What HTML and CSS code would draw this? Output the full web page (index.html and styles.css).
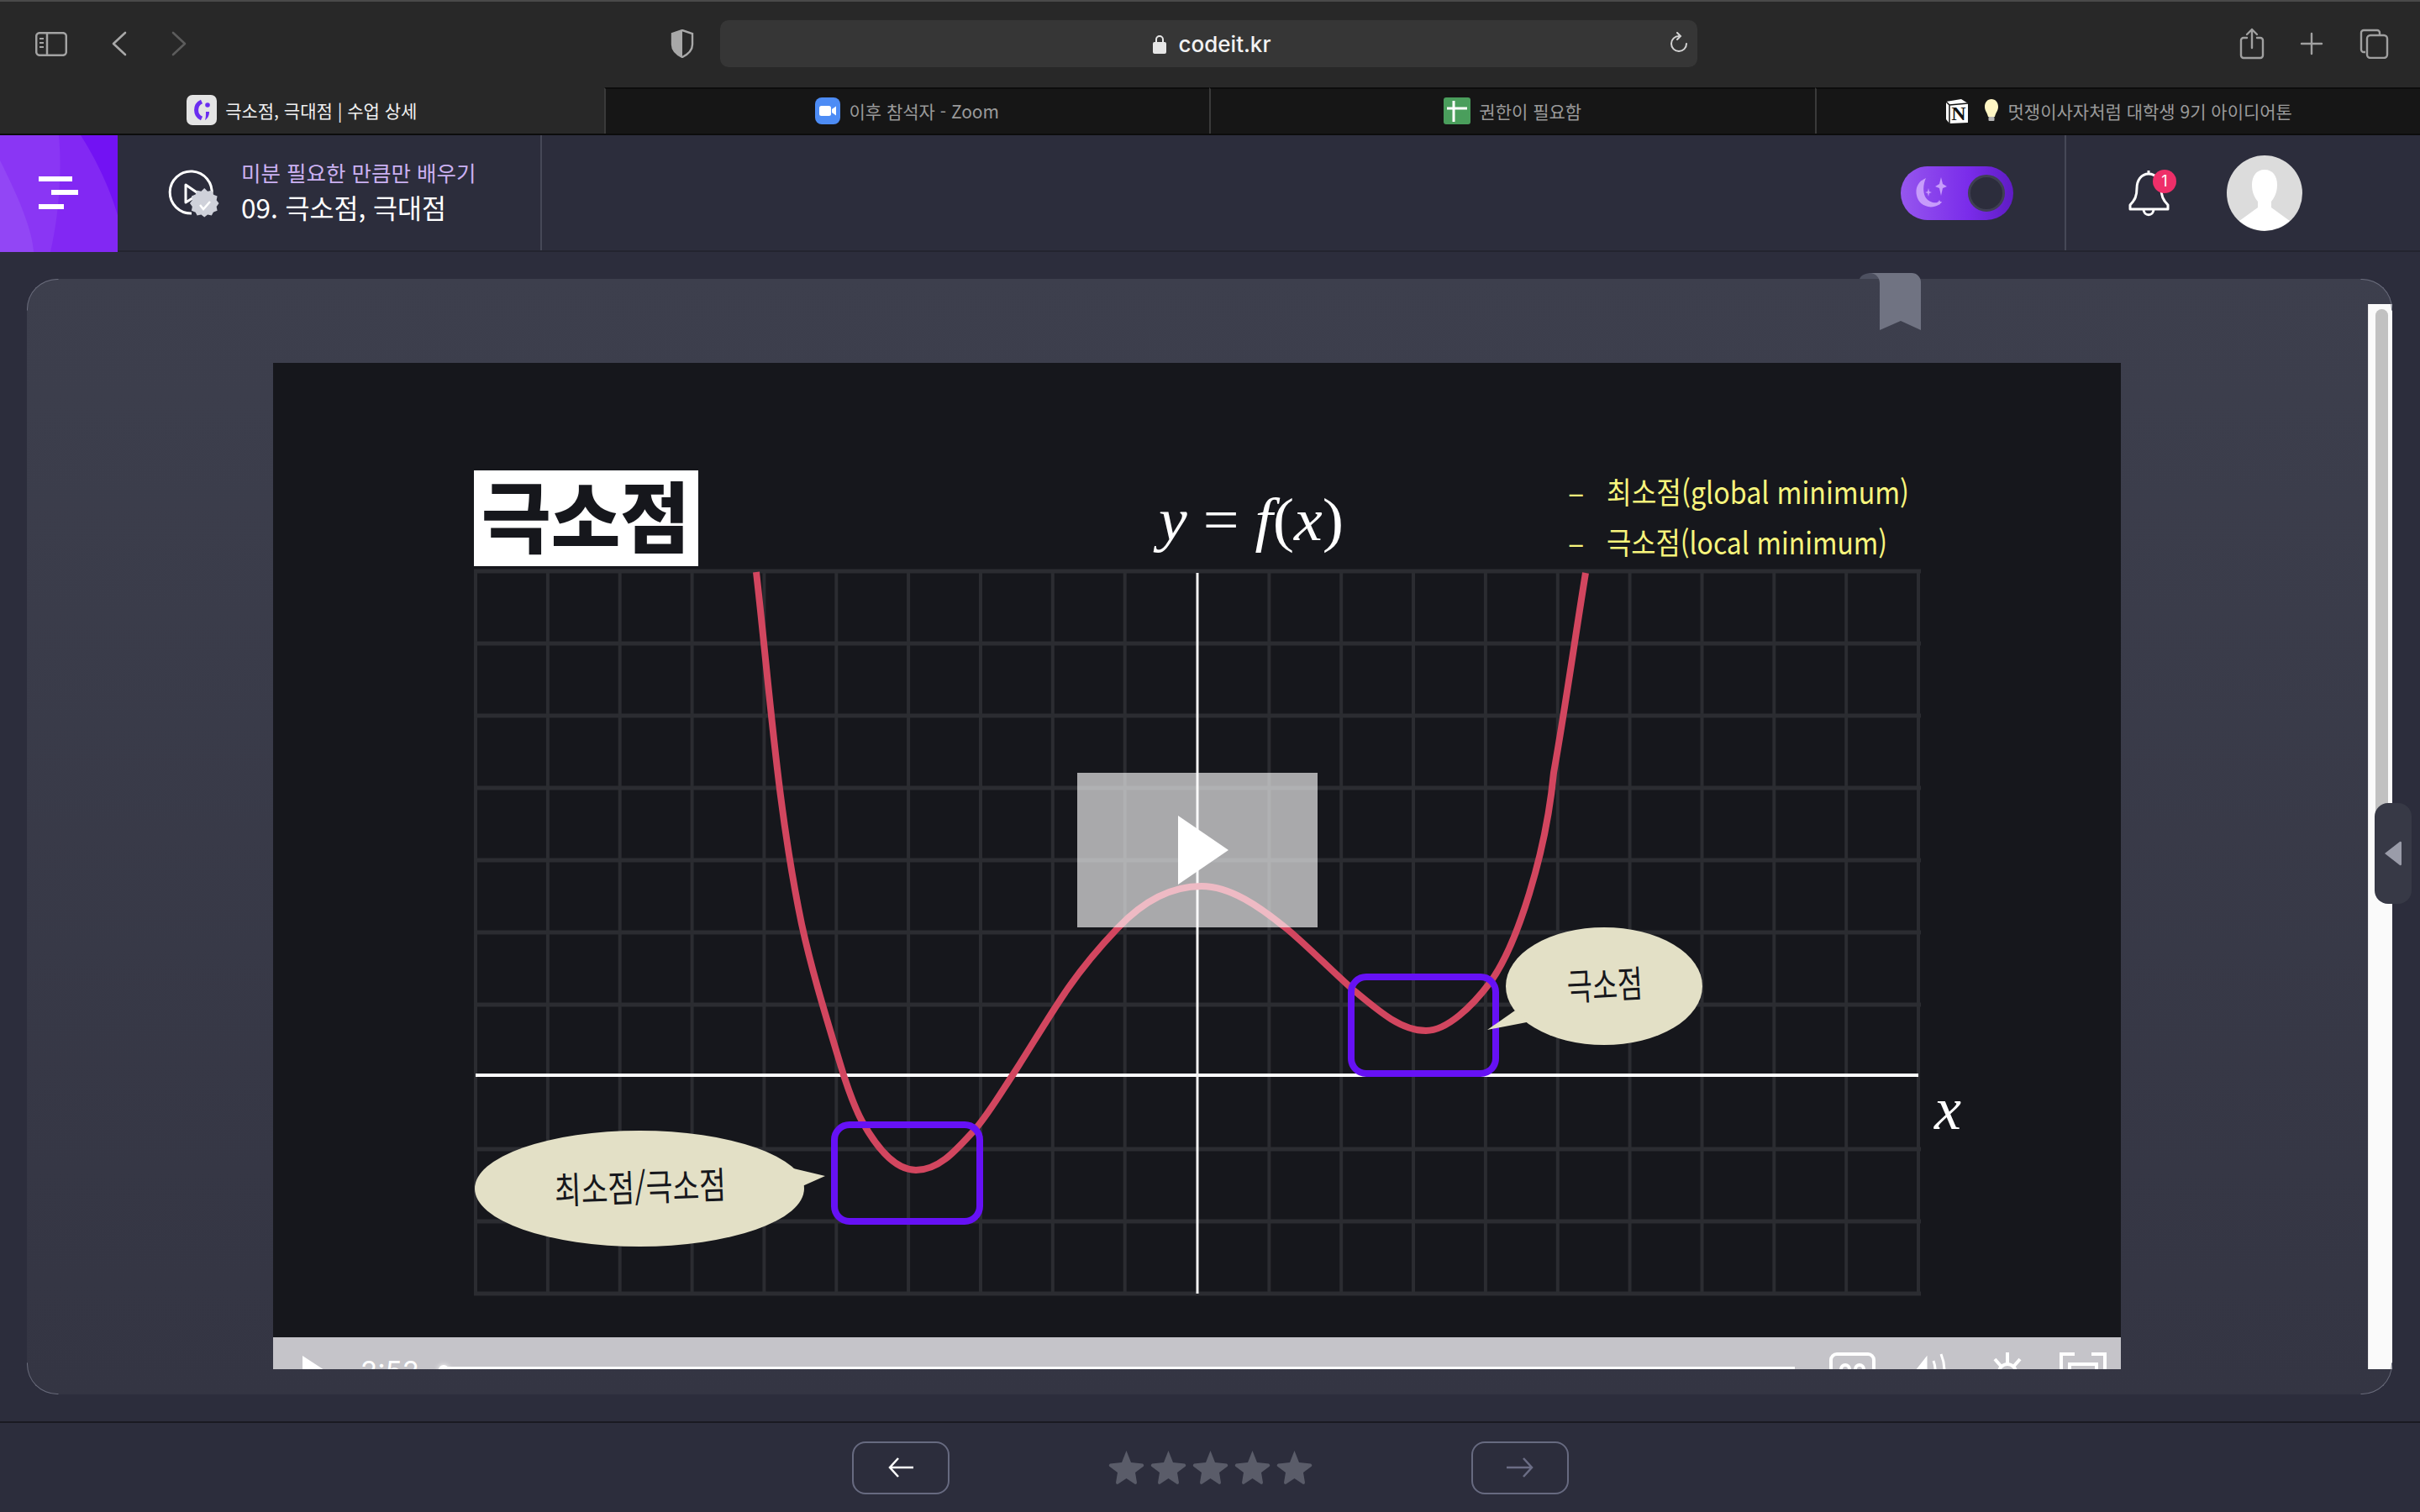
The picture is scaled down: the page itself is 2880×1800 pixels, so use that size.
FILE: index.html
```html
<!DOCTYPE html>
<html lang="ko">
<head>
    <meta charset="UTF-8">
    <title>극소점, 극대점 | 수업 상세</title>
    <link rel="stylesheet" href="styles.css">
</head>
<body>
    <!-- BROWSER CHROME -->
    <div class="toolbar">
        <svg class="ic-sidebar" width="38" height="29" viewBox="0 0 38 29" fill="none" stroke="#a3a3a3" stroke-width="2.5"><rect x="1.2" y="1.2" width="35.6" height="26.6" rx="4"/><path d="M14 1v27"/><path d="M5 8h5M5 13h5M5 18h5" stroke-width="2"/></svg>
        <svg class="ic-back" width="18" height="30" viewBox="0 0 18 30" fill="none" stroke="#a8a8a8" stroke-width="2.6" stroke-linecap="round" stroke-linejoin="round"><path d="M16 2 2 15l14 13"/></svg>
        <svg class="ic-forward" width="18" height="30" viewBox="0 0 18 30" fill="none" stroke="#5c5c5c" stroke-width="2.6" stroke-linecap="round" stroke-linejoin="round"><path d="m2 2 14 13L2 28"/></svg>
        <svg class="ic-shield" width="28" height="34" viewBox="0 0 28 34"><path d="M14 1 2 5v13c0 7 6 12 12 15 6-3 12-8 12-15V5z" fill="none" stroke="#a8a8a8" stroke-width="2.4"/><path d="M14 1 2 5v13c0 7 6 12 12 15z" fill="#a8a8a8"/></svg>
        <div class="url-bar">
            <svg width="16" height="23" viewBox="0 0 16 23"><path d="M4 10V6a4 4 0 0 1 8 0v4" fill="none" stroke="#e6e6e6" stroke-width="2"/><rect y="9" width="16" height="14" rx="2" fill="#e6e6e6"/></svg>
            <span class="url-text">codeit.kr</span>
            <svg class="ic-reload" width="22" height="26" viewBox="0 0 22 26" fill="none" stroke="#d4d4d4" stroke-width="2" stroke-linecap="round"><path d="M11 5a9 9 0 1 0 9 9"/><path d="m9 1 4 4-4 4"/></svg>
        </div>
        <svg class="ic-share" width="30" height="38" viewBox="0 0 30 38" fill="none" stroke="#a0a0a0" stroke-width="2.4" stroke-linecap="round" stroke-linejoin="round"><path d="M9 12H5a3 3 0 0 0-3 3v18a3 3 0 0 0 3 3h20a3 3 0 0 0 3-3V15a3 3 0 0 0-3-3h-4"/><path d="M15 24V2M9 8l6-6 6 6"/></svg>
        <svg class="ic-plus" width="28" height="28" viewBox="0 0 28 28" stroke="#a0a0a0" stroke-width="2.4" stroke-linecap="round"><path d="M14 2v24M2 14h24"/></svg>
        <svg class="ic-tabs" width="35" height="36" viewBox="0 0 35 36" fill="none" stroke="#a0a0a0" stroke-width="2.4"><path d="M7 28H5a3 3 0 0 1-3-3V5a3 3 0 0 1 3-3h16a3 3 0 0 1 3 3v3"/><rect x="9" y="8" width="24" height="27" rx="4"/></svg>
    </div>

    <div class="tabs">
        <div class="tab active">
            <svg width="36" height="36" viewBox="0 0 36 36"><rect width="36" height="36" rx="7" fill="#e4e4e4"/><path d="M18 8a11 11 0 0 0 0 20" fill="none" stroke="#6b2df0" stroke-width="5"/><circle cx="25" cy="12" r="2.8" fill="#6b2df0"/><path d="M27 20c0 5-2 8-5 10 1-3 1-6 1-10z" fill="#6b2df0"/></svg>
            <span>극소점, 극대점 | 수업 상세</span>
        </div>
        <div class="tab">
            <svg width="30" height="32" viewBox="0 0 30 32"><rect width="30" height="32" rx="8" fill="#4d8cf5"/><rect x="5" y="10" width="14" height="12" rx="2.5" fill="#fff"/><path d="m20 14 5-3.500v11l-5-3.500z" fill="#fff"/></svg>
            <span>이후 참석자 - Zoom</span>
        </div>
        <div class="tab">
            <svg width="32" height="32" viewBox="0 0 32 32"><rect width="32" height="32" rx="3" fill="#4a9e5c"/><path d="M12 4v25M4 13h24" stroke="#fff" stroke-width="3"/></svg>
            <span>권한이 필요함</span>
        </div>
        <div class="tab">
            <svg class="notion-icon" width="30" height="30" viewBox="0 0 30 30"><path d="M2 4 20 1l8 5v23l-22 1-4-5z" fill="#fff"/><path d="M2 4 6 8l22-2M6 8v22" fill="none" stroke="#111" stroke-width="1.500"/><text x="17" y="26" text-anchor="middle" class="notion-n">N</text></svg>
            <svg class="bulb-icon" width="20" height="27" viewBox="0 0 20 27"><path d="M10 0c5 0 8 4 8 9 0 5-3 7-4 12H6C5 16 2 14 2 9c0-5 3-9 8-9z" fill="#fff6c4"/><rect x="6.500" y="21" width="7" height="5" rx="1" fill="#b5b5b5"/></svg>
            <span>멋쟁이사자처럼 대학생 9기 아이디어톤</span>
        </div>
    </div>

    <!-- SITE HEADER -->
    <header class="site-header">
        <div class="menu-btn">
            <svg width="140" height="139" viewBox="0 0 140 139">
                <path d="M0 0h140v139H0z" fill="#8228f3"/>
                <path d="M96 0h44v95C130 60 112 25 96 0z" fill="#7212f3"/>
                <path d="M0 0h70c4 45 0 95-10 139H0z" fill="#8a36f4"/>
                <path d="M0 30c20 40 38 80 40 109H0z" fill="#9246f5"/>
                <path d="M46 49h40v6H46zM61 65h32v6H61zM46 82h30v6H46z" fill="#fff"/>
            </svg>
        </div>
        <div class="lesson-info">
            <svg width="62" height="60" viewBox="0 0 62 60" fill="none">
                <path d="M52 32A25 25 0 1 0 28 54" stroke="#fff" stroke-width="3"/>
                <path d="M21 20v21l16-10z" stroke="#fff" stroke-width="3" stroke-linejoin="round"/>
                <path d="m44 28 4 4 5-1 2 5 5 2-1 5 3 4-3 4 1 5-5 2-2 4-5-1-4 3-4-3-5 1-2-4-5-2 1-5-3-4 3-4-1-5 5-2 2-5 5 1z" fill="#cfd1da" transform="translate(1 -3) scale(.96)"/>
                <path d="m38 44 4 5 8-9" stroke="#fff" stroke-width="2.500"/>
            </svg>
            <div class="lesson-text">
                <div class="course-name">미분 필요한 만큼만 배우기</div>
                <div class="lesson-name">09. 극소점, 극대점</div>
            </div>
        </div>
        <div class="header-right">
            <div class="theme-toggle">
                <svg width="50" height="44" viewBox="0 0 50 44"><path d="M14 4C4 8 0 18 4 28c4 10 16 13 25 8 2-1 3-3 4-4-8 3-16 1-20-6-3-7-2-15 1-22z" fill="#c79cfb"/><path d="m32 3 2 8 5 3-5 2-2 9-2-9-5-2 5-3zM17 16l1 4 3 1-3 1-1 4-1-4-3-1 3-1zM30 30l1 2 2 1-2 1-1 2-1-2-2-1 2-1z" fill="#c79cfb"/></svg>
                <div class="toggle-knob"></div>
            </div>
            <div class="header-actions">
                <div class="bell">
                    <svg width="49" height="56" viewBox="0 0 49 56" fill="none" stroke="#fff" stroke-width="3" stroke-linejoin="round"><path d="M24 5c-9 0-14 8-14 17 0 9-2 14-8 20v5h45v-5c-6-6-8-11-8-20 0-9-6-17-15-17z"/><path d="M18 47c0 9 12 9 12 0"/><path d="M24 1v4"/></svg>
                    <span class="badge">1</span>
                </div>
                <div class="avatar">
                    <svg width="90" height="90" viewBox="0 0 90 90"><path d="M45 17c10 0 15 8 15 18 0 9-3 15-7 20v7l22 16a45 45 0 0 1-60 0l22-16v-7c-4-5-7-11-7-20 0-10 5-18 15-18z" fill="#fff"/></svg>
                </div>
            </div>
        </div>
    </header>

    <!-- LESSON -->
    <main class="lesson">
        <div class="card">
            <i class="corner tl"></i><i class="corner tr"></i><i class="corner bl"></i><i class="corner br"></i>
            <div class="bookmark">
                <svg width="73" height="68" viewBox="0 0 73 68"><path d="M0 7c2-5 8-7 14-7h10v7z" fill="#4d5060"/><path d="M12 0h50a11 11 0 0 1 11 11v57l-24-11-25 11V12c0-7-5-12-12-12z" fill="#707382"/></svg>
            </div>
            <div class="video-area">
                <div class="video">
                    <svg class="slide" viewBox="325 432 2199 1160" width="2199" height="1160">
                        <!-- grid -->
                        <path class="grid-v" d="M566 678V1541M651.900 678V1541M737.700 678V1541M823.600 678V1541M909.400 678V1541M995.300 678V1541M1081.100 678V1541M1167 678V1541M1252.800 678V1541M1338.700 678V1541M1510.400 678V1541M1596.200 678V1541M1682 678V1541M1767.900 678V1541M1853.800 678V1541M1939.600 678V1541M2025.500 678V1541M2111.300 678V1541M2197.200 678V1541M2283 678V1541"/>
                        <path class="grid-h" d="M564 680H2286M564 766H2286M564 852H2286M564 938H2286M564 1024H2286M564 1110H2286M564 1196H2286M564 1368H2286M564 1454H2286M564 1540H2286"/>
                        <path class="axis-x" d="M566 1280H2283"/>
                        <path class="axis-y" d="M1425 682V1540"/>
                        <!-- curve -->
                        <path class="curve" d="M900 681C916 821 925 960 954 1100C967 1160 986 1220 1004 1280C1010 1298 1016 1317 1026 1335C1040 1360 1062 1393 1090 1393C1118 1393 1138 1369 1160 1345C1175 1328 1190 1303 1205 1280C1227 1246 1248 1210 1270 1178C1290 1149 1310 1126 1330 1105C1363 1070 1397 1055 1430 1055C1464 1055 1499 1079 1533 1107C1559 1129 1584 1155 1610 1178C1640 1203 1667 1227 1697 1227C1722 1227 1752 1198 1773 1170C1806 1125 1840 1015 1849 920C1862 848 1874 762 1887 682"/>
                        <rect class="focus" x="993" y="1339" width="173" height="115" rx="18"/>
                        <rect class="focus" x="1608" y="1163" width="172" height="115" rx="18"/>
                        <!-- bubbles -->
                        <ellipse class="bubble" cx="761" cy="1415" rx="196" ry="69"/>
                        <path class="bubble" d="M940 1390 982 1400 955 1412z"/>
                        <ellipse class="bubble" cx="1909" cy="1174" rx="117" ry="70"/>
                        <path class="bubble" d="M1803 1203 1770 1226 1822 1216z"/>
                        <text class="bubble-text" x="762" y="1430" textLength="204" lengthAdjust="spacingAndGlyphs" transform="rotate(-2 762 1415)" text-anchor="middle">최소점/극소점</text>
                        <text class="bubble-text" x="1910" y="1189" textLength="90" lengthAdjust="spacingAndGlyphs" transform="rotate(-3 1910 1175)" text-anchor="middle">극소점</text>
                        <!-- headings -->
                        <rect x="564" y="560" width="267" height="114" fill="#fff"/>
                        <text class="slide-title" x="697" y="651" text-anchor="middle" textLength="248" lengthAdjust="spacingAndGlyphs">극소점</text>
                        <text class="formula" x="1379" y="643" textLength="220" lengthAdjust="spacingAndGlyphs"><tspan class="var">y</tspan> = <tspan class="var">f</tspan>(<tspan class="var">x</tspan>)</text>
                        <text class="formula var" x="2302" y="1344" font-size="70">x</text>
                        <text class="note" x="1866" y="600">–</text>
                        <text class="note" x="1912" y="600" textLength="360" lengthAdjust="spacingAndGlyphs">최소점(global minimum)</text>
                        <text class="note" x="1866" y="660">–</text>
                        <text class="note" x="1912" y="660" textLength="334" lengthAdjust="spacingAndGlyphs">극소점(local minimum)</text>
                    </svg>
                    <div class="play-overlay">
                        <svg width="60" height="82" viewBox="0 0 60 82"><path d="M0 0 60 41 0 82z" fill="#fff"/></svg>
                    </div>
                    <div class="controls">
                        <svg class="ctl-play" width="26" height="34" viewBox="0 0 26 34"><path d="M0 0 26 17 0 34z" fill="#fff"/></svg>
                        <span class="ctl-time">2:52</span>
                        <div class="ctl-progress"></div>
                        <svg class="ctl-cc" width="55" height="40" viewBox="0 0 55 40" fill="none" stroke="#fff" stroke-width="4"><rect x="2" y="2" width="51" height="36" rx="7"/><circle cx="19" cy="20" r="5"/><circle cx="36" cy="20" r="5"/></svg>
                        <svg class="ctl-vol" width="46" height="40" viewBox="0 0 46 40" fill="none" stroke="#fff" stroke-width="3"><path d="M0 22h8l11-14v28L8 30H0z" fill="#fff"/><path d="M28 10c3 8 3 16 0 26M37 2c5 12 5 26 0 38"/></svg>
                        <svg class="ctl-gear" width="36" height="40" viewBox="0 0 36 40" fill="none" stroke="#fff" stroke-width="4"><circle cx="18" cy="24" r="10"/><path d="M18 0v13M3 8l7 8M33 8l-7 8"/></svg>
                        <svg class="ctl-full" width="56" height="40" viewBox="0 0 56 40" fill="none" stroke="#fff" stroke-width="4"><path d="M2 20V2h16M54 20V2H38"/><rect x="12" y="14" width="32" height="24"/></svg>
                    </div>
                </div>
            </div>
            <div class="scroll-track">
                <div class="scroll-thumb"></div>
            </div>
            <div class="side-handle">
                <svg width="20" height="30" viewBox="0 0 20 30"><path d="M0 15 18 1a1.500 1.500 0 0 1 2 1v26a1.500 1.500 0 0 1-2 1z" fill="#9a9ca9"/></svg>
            </div>
        </div>
    </main>

    <!-- FOOTER NAV -->
    <footer class="lesson-nav">
        <button class="nav-btn">
            <svg width="30" height="24" viewBox="0 0 30 24" fill="none" stroke="#fff" stroke-width="2.500"><path d="M12 1 2 12l10 11M2 12h28"/></svg>
        </button>
        <div class="stars">
            <svg width="43" height="40" viewBox="0 0 43 40"><path class="star" d="M21.500 0 27 14l14 1.500q2 1.500 1 3L32 26l2 12q0 2-2 2l-10.500-7L11 40q-2 0-2-2l2-12L1 18.500q-1-1.500 1-3L16 14z"/></svg>
            <svg width="43" height="40" viewBox="0 0 43 40"><path class="star" d="M21.500 0 27 14l14 1.500q2 1.500 1 3L32 26l2 12q0 2-2 2l-10.500-7L11 40q-2 0-2-2l2-12L1 18.500q-1-1.500 1-3L16 14z"/></svg>
            <svg width="43" height="40" viewBox="0 0 43 40"><path class="star" d="M21.500 0 27 14l14 1.500q2 1.500 1 3L32 26l2 12q0 2-2 2l-10.500-7L11 40q-2 0-2-2l2-12L1 18.500q-1-1.500 1-3L16 14z"/></svg>
            <svg width="43" height="40" viewBox="0 0 43 40"><path class="star" d="M21.500 0 27 14l14 1.500q2 1.500 1 3L32 26l2 12q0 2-2 2l-10.500-7L11 40q-2 0-2-2l2-12L1 18.500q-1-1.500 1-3L16 14z"/></svg>
            <svg width="43" height="40" viewBox="0 0 43 40"><path class="star" d="M21.500 0 27 14l14 1.500q2 1.500 1 3L32 26l2 12q0 2-2 2l-10.500-7L11 40q-2 0-2-2l2-12L1 18.500q-1-1.500 1-3L16 14z"/></svg>
        </div>
        <button class="nav-btn">
            <svg width="32" height="24" viewBox="0 0 32 24" fill="none" stroke="#6b6d85" stroke-width="2.500"><path d="m20 1 10 11-10 11M0 12h30"/></svg>
        </button>
    </footer>
</body>
</html>
```
FILE: styles.css
```css
* {
    box-sizing: border-box;
}

body {
    margin: 0;
    width: 2880px;
    height: 1800px;
    overflow: hidden;
    display: flex;
    flex-direction: column;
    background: #2c2d3c;
    font-family: Inter, "Noto Sans CJK KR", sans-serif;
    color: #fff;
}

svg {
    display: block;
    flex: none;
}

/* Browser chrome */
.toolbar {
    height: 104px;
    flex: none;
    display: flex;
    align-items: center;
    padding: 0 0 2px 42px;
    background: #282828;
    border-top: 2px solid #4a4a4a;
}

.ic-back { margin-left: 53px; }
.ic-forward { margin-left: 53px; }
.ic-shield { margin-left: 576px; }
.ic-share { margin-left: 645px; }
.ic-plus { margin-left: 42px; }
.ic-tabs { margin-left: 43px; }

.url-bar {
    position: relative;
    width: 1163px;
    height: 56px;
    margin-left: 31px;
    display: flex;
    align-items: center;
    justify-content: center;
    gap: 15px;
    padding-left: 7px;
    background: #363636;
    border-radius: 10px;
}

.url-text {
    font-size: 26px;
    font-weight: 500;
    color: #f2f2f2;
}

.ic-reload {
    position: absolute;
    right: 11px;
    top: 14px;
}

.tabs {
    height: 57px;
    flex: none;
    display: flex;
    background: #161616;
    border-bottom: 2px solid #0c0c0c;
}

.tab {
    flex: 1;
    display: flex;
    align-items: center;
    justify-content: center;
    gap: 10px;
    padding-bottom: 2px;
    font-family: "Noto Sans CJK KR", sans-serif;
    font-size: 21px;
    color: #9a9a9a;
    border-top: 2px solid #0c0c0c;
    border-left: 2px solid #3a3a3a;
}

.tab.active {
    color: #f0f0f0;
    background: #282828;
    border-top: 0;
    border-left: 0;
}

.bulb-icon {
    margin-left: 6px;
}

.notion-n {
    font-family: "Liberation Serif", serif;
    font-weight: 700;
    font-size: 24px;
    fill: #111;
}

/* Site header */
.site-header {
    height: 139px;
    flex: none;
    display: flex;
    background: #2c2d3c;
    border-bottom: 2px solid #23242f;
}

.menu-btn {
    width: 140px;
    flex: none;
}

.lesson-info {
    width: 505px;
    display: flex;
    align-items: center;
    gap: 25px;
    padding-left: 60px;
    border-right: 2px solid #464857;
}

.lesson-text {
    font-family: "Noto Sans CJK KR", sans-serif;
    margin-top: -3px;
}

.course-name {
    font-size: 25.5px;
    line-height: 36px;
    color: #cbb1f2;
}

.lesson-name {
    font-size: 31.5px;
    line-height: 46px;
    color: #fff;
}

.header-right {
    margin-left: auto;
    display: flex;
    align-items: center;
}

.theme-toggle {
    width: 134px;
    height: 64px;
    display: flex;
    align-items: center;
    justify-content: space-between;
    padding: 0 10px 0 16px;
    border-radius: 32px;
    background: linear-gradient(90deg, #9656ee, #7a2cea 60%, #5f1cc4);
}

.toggle-knob {
    width: 44px;
    height: 44px;
    border-radius: 50%;
    background: #2c2d3c;
    border: 3px solid #3f4052;
}

.header-actions {
    height: 100%;
    margin-left: 61px;
    padding: 0 140px 0 74px;
    display: flex;
    align-items: center;
    gap: 68px;
    border-left: 2px solid #464857;
}

.bell {
    position: relative;
}

.badge {
    position: absolute;
    top: 0;
    left: 29px;
    width: 28px;
    height: 28px;
    border-radius: 50%;
    background: #ee2f69;
    font-size: 18px;
    line-height: 28px;
    text-align: center;
    color: #fff;
}

.avatar {
    width: 90px;
    height: 90px;
    border-radius: 50%;
    background: #dcdcdc;
    overflow: hidden;
}

/* Lesson card */
.lesson {
    flex: 1;
    display: flex;
    padding: 32px 33px 32px 32px;
}

.card {
    position: relative;
    flex: 1;
    display: flex;
    padding: 30px 0;
    border-radius: 36px;
    background: linear-gradient(180deg, #3d3f4d, #343543);
}

.corner {
    position: absolute;
    width: 38px;
    height: 38px;
    border: 1px solid transparent;
}

.corner.tl { top: 0; left: 0; border-top-color: #6a6c7c; border-left-color: #6a6c7c; border-top-left-radius: 36px; }
.corner.tr { top: 0; right: 0; border-top-color: #6a6c7c; border-right-color: #6a6c7c; border-top-right-radius: 36px; }
.corner.bl { bottom: 0; left: 0; border-bottom-color: #6a6c7c; border-left-color: #6a6c7c; border-bottom-left-radius: 36px; }
.corner.br { bottom: 0; right: 0; border-bottom-color: #6a6c7c; border-right-color: #6a6c7c; border-bottom-right-radius: 36px; }

.bookmark {
    position: absolute;
    top: -7px;
    left: 2181px;
}

.video-area {
    flex: 1;
    padding: 70px 294px 0 293px;
}

.video {
    position: relative;
    height: 1198px;
    background: #16171c;
    overflow: hidden;
}

.slide {
    background: #16171c;
}

.grid-v {
    fill: none;
    stroke: #2b2c31;
    stroke-width: 4;
}

.grid-h {
    fill: none;
    stroke: #2b2c31;
    stroke-width: 5;
}

.axis-x {
    stroke: #fff;
    stroke-width: 4;
}

.axis-y {
    stroke: #f2f2f2;
    stroke-width: 3;
}

.curve {
    fill: none;
    stroke: #d2465f;
    stroke-width: 8;
}

.focus {
    fill: none;
    stroke: #6611f5;
    stroke-width: 8;
}

.bubble {
    fill: #e3e0c6;
}

.bubble-text {
    font-family: "Noto Sans CJK KR", sans-serif;
    font-size: 44px;
    font-weight: 400;
    fill: #16171c;
}

.slide-title {
    font-family: "Noto Sans CJK KR", sans-serif;
    font-size: 92px;
    font-weight: 900;
    fill: #16171c;
}

.formula {
    font-family: "Liberation Serif", serif;
    font-size: 72px;
    fill: #fff;
}

.var {
    font-style: italic;
}

.note {
    font-family: "Noto Sans CJK KR", sans-serif;
    font-size: 36px;
    font-weight: 400;
    fill: #f8f57c;
}

.play-overlay {
    position: absolute;
    left: 957px;
    top: 488px;
    width: 286px;
    height: 184px;
    display: flex;
    align-items: center;
    justify-content: center;
    padding-left: 14px;
    background: rgba(255, 255, 255, 0.63);
}

.controls {
    height: 38px;
    display: flex;
    align-items: flex-start;
    padding-left: 35px;
    background: #c5c4c9;
    overflow: hidden;
}

.ctl-play { margin-top: 22px; }

.ctl-time {
    margin: 20px 0 0 43px;
    font-size: 33px;
    line-height: 40px;
    color: #fff;
}

.ctl-progress {
    position: relative;
    flex: 1;
    height: 3px;
    margin: 35px 41px 0 33px;
    background: #fff;
}

.ctl-progress::before {
    content: "";
    position: absolute;
    left: -10px;
    top: -2px;
    width: 12px;
    height: 12px;
    border-radius: 50%;
    background: #fff;
    box-shadow: 0 0 6px #fff;
}

.ctl-cc { margin-top: 18px; }
.ctl-vol { margin: 18px 0 0 41px; }
.ctl-gear { margin: 18px 0 0 52px; }
.ctl-full { margin: 18px 17px 0 44px; }

/* Scrollbar and drawer handle */
.scroll-track {
    width: 29px;
    flex: none;
    padding: 6px 5px 0 8px;
    background: #fafafa;
    border-left: 1px solid #e8e8ea;
}

.scroll-thumb {
    height: 640px;
    border-radius: 8px 8px 0 0;
    background: #c1c1c1;
}

.side-handle {
    position: absolute;
    top: 624px;
    left: 2794px;
    width: 44px;
    height: 120px;
    display: flex;
    align-items: center;
    justify-content: center;
    border-radius: 16px;
    background: #373946;
}

/* Footer nav */
.lesson-nav {
    height: 108px;
    flex: none;
    display: flex;
    align-items: center;
    justify-content: center;
    gap: 189px;
    background: #2c2d3c;
    border-top: 2px solid #1a1a22;
}

.nav-btn {
    width: 116px;
    height: 63px;
    display: flex;
    align-items: center;
    justify-content: center;
    padding: 0;
    background: transparent;
    border: 2px solid #676a80;
    border-radius: 16px;
}

.stars {
    display: flex;
    gap: 7px;
}

.star {
    fill: #5a5c69;
}
```
